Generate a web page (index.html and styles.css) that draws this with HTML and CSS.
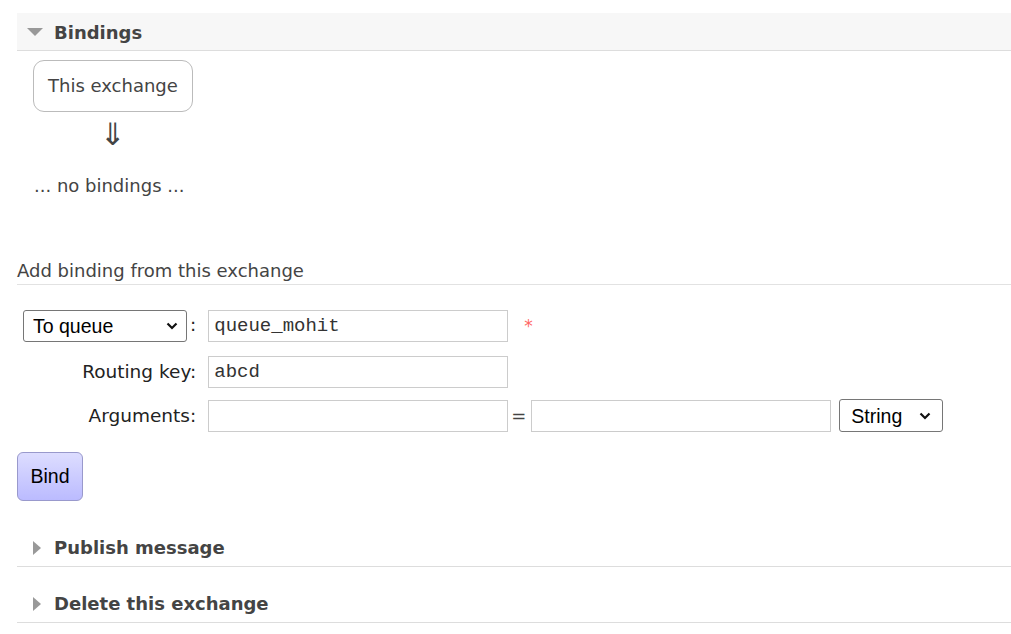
FILE: index.html
```html
<!DOCTYPE html>
<html>
<head>
<meta charset="utf-8">
<link rel="stylesheet" href="styles.css">
</head>
<body>
<div class="page">
  <div class="section open">
    <h2 class="sec-head"><span class="tri tri-down"></span>Bindings</h2>
    <div class="sec-body">
      <div class="bindings-graph">
        <div class="ex-box">This exchange</div>
        <div class="arrow">&#8659;</div>
      </div>
      <p class="none">... no bindings ...</p>
      <h3 class="sub-head">Add binding from this exchange</h3>
      <table class="form">
        <tr class="r1">
          <th><span class="sel-wrap"><select class="sel sel-dest"><option>To queue</option><option>To exchange</option></select><svg class="chev" width="12" height="8" viewBox="0 0 12 8"><path d="M1.5 1.5 L6 6 L10.5 1.5" fill="none" stroke="#111" stroke-width="2.2"/></svg></span>:</th>
          <td><input class="txt" type="text" value="queue_mohit"><span class="mand">*</span></td>
        </tr>
        <tr class="r2">
          <th><label>Routing key:</label></th>
          <td><input class="txt" type="text" value="abcd"></td>
        </tr>
        <tr class="r3">
          <th><label>Arguments:</label></th>
          <td><div class="args"><input class="txt" type="text"><span class="eq">=</span><input class="txt" type="text"><span class="sel-wrap type-wrap"><select class="sel sel-type"><option>String</option><option>Number</option><option>List</option></select><svg class="chev chev-type" width="12" height="8" viewBox="0 0 12 8"><path d="M1.5 1.5 L6 6 L10.5 1.5" fill="none" stroke="#111" stroke-width="2.2"/></svg></span></div></td>
        </tr>
      </table>
      <button class="btn">Bind</button>
    </div>
  </div>
  <div class="section closed">
    <h2 class="sec-head"><span class="tri tri-right"></span>Publish message</h2>
  </div>
  <div class="section closed">
    <h2 class="sec-head"><span class="tri tri-right"></span>Delete this exchange</h2>
  </div>
</div>
</body>
</html>
```
FILE: styles.css
```css
html, body {
  margin: 0;
  padding: 0;
  background: #fff;
}
body {
  font-family: "DejaVu Sans", Verdana, sans-serif;
  font-size: 18px;
  line-height: 22px;
  color: #444;
}
.page {
  padding: 13px 0 0 17px;
}
.sec-head {
  margin: 0;
  display: flex;
  align-items: center;
  height: 37px;
  border-bottom: 1px solid #ddd;
  font-size: 18px;
  font-weight: bold;
  color: #444;
  box-sizing: border-box;
}
.open .sec-head {
  height: 38px;
  padding-top: 2px;
  background: #f7f7f7;
}
.closed .sec-head {
  height: 56px;
  padding-top: 18px;
}
.tri {
  width: 0;
  height: 0;
  display: inline-block;
  flex: none;
}
.tri-down {
  margin: -2px 11px 0 10px;
  border-left: 8px solid transparent;
  border-right: 8px solid transparent;
  border-top: 8px solid #999;
}
.tri-right {
  margin: 0 13px 0 16px;
  border-top: 7px solid transparent;
  border-bottom: 7px solid transparent;
  border-left: 8px solid #999;
}
.section:nth-child(2) .sec-head {
  height: 66px;
  padding-top: 28px;
}
.sec-body {
  padding: 9px 0 0 0;
}
.bindings-graph {
  display: inline-flex;
  flex-direction: column;
  align-items: center;
  margin-left: 16px;
}
.ex-box {
  border: 1px solid #bbb;
  border-radius: 11px;
  padding: 0 14px;
  height: 50px;
  line-height: 50px;
  color: #444;
}
.arrow {
  font-size: 31px;
  line-height: 36px;
  margin-top: 4px;
  color: #444;
}
.none {
  margin: 23px 0 0 17px;
  color: #444;
}
.sub-head {
  margin: 63px 0 0 0;
  font-size: 18px;
  font-weight: normal;
  line-height: 22px;
  color: #444;
  padding-bottom: 2px;
  border-bottom: 1px solid #e2e2e2;
}
.form {
  border-collapse: collapse;
  margin-top: 25px;
  margin-left: 6px;
}
.form th {
  text-align: right;
  font-weight: normal;
  font-size: 18.5px;
  padding: 0 12px 0 0;
  color: #222;
  vertical-align: middle;
  white-space: nowrap;
}
.form td {
  padding: 0;
  vertical-align: middle;
}
.form .r2 th,
.form .r2 td {
  padding-top: 14px;
}
.form .r3 th,
.form .r3 td {
  padding-top: 11px;
}
.sel-wrap {
  position: relative;
  display: inline-block;
  vertical-align: middle;
}
.sel {
  -webkit-appearance: none;
  appearance: none;
  font-family: "Liberation Sans", Arial, sans-serif;
  font-size: 19.5px;
  color: #000;
  border: 1px solid #767676;
  border-radius: 3px;
  background: #fff;
  height: 32px;
  padding: 0 4px 0 9px;
  margin: 0;
  display: block;
}
.sel-dest {
  width: 164px;
}
.r1 th .sel-wrap {
  margin-right: 3px;
}
.chev {
  position: absolute;
  right: 9px;
  top: 12px;
  pointer-events: none;
}
.type-wrap {
  margin-left: 8px;
}
.sel-type {
  width: 104px;
  height: 33px;
  padding-left: 11px;
}
.chev-type {
  right: 12px;
  top: 13px;
}
.txt {
  font-family: "Liberation Mono", "Courier New", monospace;
  font-size: 19px;
  color: #333;
  width: 300px;
  height: 32px;
  box-sizing: border-box;
  border: 1px solid #ccc;
  padding: 0 5px;
  margin: 0;
  vertical-align: middle;
}
.mand {
  color: #f66;
  margin-left: 16px;
  font-size: 17px;
  vertical-align: middle;
}
.args {
  display: flex;
  align-items: center;
}
.eq {
  margin: 0 5px 0 3px;
  color: #444;
}
.btn {
  margin-top: 20px;
  display: block;
  width: 66px;
  height: 49px;
  font-family: "Liberation Sans", Arial, sans-serif;
  font-size: 19.5px;
  color: #000;
  border: 1px solid #99c;
  border-radius: 6px;
  background: linear-gradient(#ddf, #bbf);
  padding: 0;
}
```
